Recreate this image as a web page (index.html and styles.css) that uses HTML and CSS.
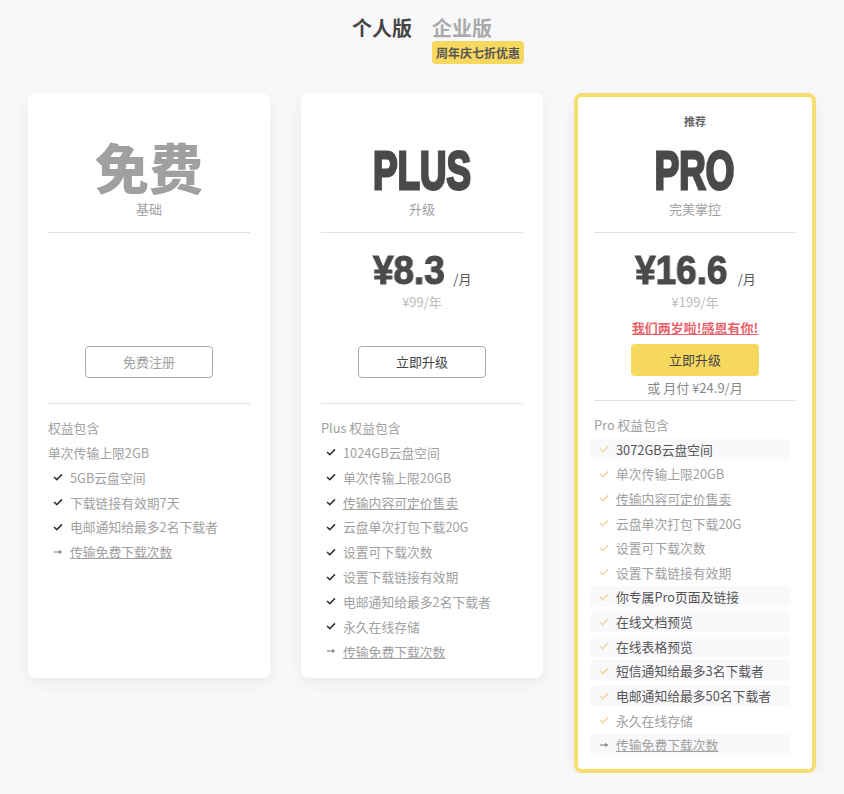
FILE: index.html
```html
<!DOCTYPE html>
<html lang="zh-CN">

<head>
    <meta charset="UTF-8">
    <title>价格方案</title>
    <link rel="stylesheet" href="styles.css">
</head>

<body>

    <svg class="icon-defs" width="0" height="0">
        <symbol id="check" viewBox="0 0 10 8">
            <path d="M1 4 L3.8 6.6 L9 1.4" fill="none" stroke="currentColor" stroke-width="1.5" />
        </symbol>
        <symbol id="arrow" viewBox="0 0 10 8">
            <path d="M1 4 H7.5" fill="none" stroke="currentColor" stroke-width="1.2" />
            <path d="M6.2 1.8 L9.4 4 L6.2 6.2 Z" fill="currentColor" />
        </symbol>
    </svg>

    <div class="tabs">
        <div class="tab tab-active">个人版</div>
        <div class="tab">企业版<span class="tab-badge">周年庆七折优惠</span></div>
    </div>

    <div class="plans">
        <div class="plan">
            <div class="plan-head">
                <div class="plan-name plan-name-cn">免费</div>
                <div class="plan-sub">基础</div>
            </div>
            <div class="plan-buy">
                <a class="btn btn-free">免费注册</a>
            </div>
            <ul class="features">
                <li class="features-title">权益包含</li>
                <li class="features-title">单次传输上限2GB</li>
                <li><svg class="icon"><use href="#check" /></svg>5GB云盘空间</li>
                <li><svg class="icon"><use href="#check" /></svg>下载链接有效期7天</li>
                <li><svg class="icon"><use href="#check" /></svg>电邮通知给最多2名下载者</li>
                <li><svg class="icon icon-arrow"><use href="#arrow" /></svg><u>传输免费下载次数</u></li>
            </ul>
        </div>

        <div class="plan">
            <div class="plan-head">
                <div class="plan-name"><span class="squeeze">PLUS</span></div>
                <div class="plan-sub">升级</div>
            </div>
            <div class="plan-buy">
                <div class="price"><span class="price-num">¥8.3</span><span class="price-unit">/月</span></div>
                <div class="price-year">¥99/年</div>
                <a class="btn">立即升级</a>
            </div>
            <ul class="features">
                <li class="features-title">Plus 权益包含</li>
                <li><svg class="icon"><use href="#check" /></svg>1024GB云盘空间</li>
                <li><svg class="icon"><use href="#check" /></svg>单次传输上限20GB</li>
                <li><svg class="icon"><use href="#check" /></svg><u>传输内容可定价售卖</u></li>
                <li><svg class="icon"><use href="#check" /></svg>云盘单次打包下载20G</li>
                <li><svg class="icon"><use href="#check" /></svg>设置可下载次数</li>
                <li><svg class="icon"><use href="#check" /></svg>设置下载链接有效期</li>
                <li><svg class="icon"><use href="#check" /></svg>电邮通知给最多2名下载者</li>
                <li><svg class="icon"><use href="#check" /></svg>永久在线存储</li>
                <li><svg class="icon icon-arrow"><use href="#arrow" /></svg><u>传输免费下载次数</u></li>
            </ul>
        </div>

        <div class="plan plan-pro">
            <div class="plan-head">
                <div class="plan-tag">推荐</div>
                <div class="plan-name"><span class="squeeze">PRO</span></div>
                <div class="plan-sub">完美掌控</div>
            </div>
            <div class="plan-buy">
                <div class="price"><span class="price-num">¥16.6</span><span class="price-unit">/月</span></div>
                <div class="price-year">¥199/年</div>
                <div class="promo">我们两岁啦!感恩有你!</div>
                <a class="btn btn-pro">立即升级</a>
                <div class="price-month">或 月付 ¥24.9/月</div>
            </div>
            <ul class="features">
                <li class="features-title">Pro 权益包含</li>
                <li class="hl"><svg class="icon"><use href="#check" /></svg>3072GB云盘空间</li>
                <li><svg class="icon"><use href="#check" /></svg>单次传输上限20GB</li>
                <li><svg class="icon"><use href="#check" /></svg><u>传输内容可定价售卖</u></li>
                <li><svg class="icon"><use href="#check" /></svg>云盘单次打包下载20G</li>
                <li><svg class="icon"><use href="#check" /></svg>设置可下载次数</li>
                <li><svg class="icon"><use href="#check" /></svg>设置下载链接有效期</li>
                <li class="hl"><svg class="icon"><use href="#check" /></svg>你专属Pro页面及链接</li>
                <li class="hl"><svg class="icon"><use href="#check" /></svg>在线文档预览</li>
                <li class="hl"><svg class="icon"><use href="#check" /></svg>在线表格预览</li>
                <li class="hl"><svg class="icon"><use href="#check" /></svg>短信通知给最多3名下载者</li>
                <li class="hl"><svg class="icon"><use href="#check" /></svg>电邮通知给最多50名下载者</li>
                <li><svg class="icon"><use href="#check" /></svg>永久在线存储</li>
                <li class="hl hl-muted"><svg class="icon icon-arrow"><use href="#arrow" /></svg><u>传输免费下载次数</u></li>
            </ul>
        </div>
    </div>

</body>

</html>
```

FILE: styles.css
```css
body {
    margin: 0;
    background: #f8f8fa;
    font-family: "Noto Sans CJK SC", "Liberation Sans", sans-serif;
    color: #a0a0a0;
}

.icon-defs {
    position: absolute;
}

.tabs {
    display: flex;
    justify-content: center;
    gap: 20px;
    height: 93px;
    box-sizing: border-box;
    padding-top: 14px;
}

.tab {
    position: relative;
    font-size: 20px;
    line-height: 28px;
    font-weight: 700;
    color: #aaa;
}

.tab-active {
    color: #444;
}

.tab-badge {
    position: absolute;
    top: 27px;
    left: 0;
    width: 92px;
    height: 23px;
    background: #f7d85e;
    border-radius: 4px;
    color: #555;
    font-size: 12px;
    line-height: 23px;
    text-align: center;
    white-space: nowrap;
}

.plans {
    display: flex;
    align-items: flex-start;
    gap: 31px;
    padding-left: 28px;
}

.plan {
    width: 242px;
    height: 585px;
    box-sizing: border-box;
    padding: 0 20px;
    background: #fff;
    border-radius: 8px;
    box-shadow: 0 5px 16px rgba(0, 0, 0, 0.06);
}

.plan-pro {
    height: 680px;
    padding: 0 16px;
    border: 4px solid #f7dc6f;
}

.plan-head {
    display: flex;
    flex-direction: column;
    justify-content: flex-end;
    align-items: center;
    height: 140px;
    padding-bottom: 14px;
    box-sizing: border-box;
    border-bottom: 1px solid #e2e2e2;
}

.plan-pro .plan-head {
    height: 136px;
}

.plan-tag {
    font-size: 11px;
    line-height: 16px;
    font-weight: 700;
    color: #666;
    margin-bottom: 11px;
}

.plan-name {
    height: 60px;
    line-height: 60px;
    font-family: "Liberation Sans", sans-serif;
    font-size: 54px;
    font-weight: 700;
    color: #4a4a4a;
}

.plan-name-cn {
    font-family: "Noto Sans CJK SC", sans-serif;
    font-weight: 900;
    font-size: 54px;
    line-height: 54px;
    color: #a0a0a0;
}

.squeeze {
    display: inline-block;
    transform: scaleX(0.68);
    will-change: transform;
    -webkit-text-stroke: 3px currentColor;
}

.plan-sub {
    height: 18px;
    font-size: 13px;
    line-height: 18px;
    color: #a0a0a0;
}

.plan-buy {
    display: flex;
    flex-direction: column;
    align-items: center;
    height: 171px;
    box-sizing: border-box;
    padding-bottom: 25px;
    border-bottom: 1px solid #e2e2e2;
}

.plan-pro .plan-buy {
    height: auto;
    padding-bottom: 3px;
}

.price {
    display: flex;
    align-items: baseline;
    height: 50px;
    margin-top: 12px;
    line-height: 50px;
    color: #4a4a4a;
}

.price-num {
    display: inline-block;
    margin: 0 -4px;
    font-family: "Liberation Sans", sans-serif;
    font-size: 41px;
    font-weight: 700;
    -webkit-text-stroke: 1.2px currentColor;
    transform: scaleX(0.9);
    will-change: transform;
}

.price-unit {
    margin-left: 9px;
    font-size: 13px;
    color: #555;
}

.price-year {
    margin-top: -2px;
    height: 18px;
    font-size: 13px;
    line-height: 18px;
    color: #bbb;
}

.promo {
    margin-top: 9px;
    height: 16px;
    font-size: 13px;
    line-height: 16px;
    font-weight: 700;
    color: #e8636a;
    text-decoration: underline;
}

.btn {
    display: block;
    width: 128px;
    height: 32px;
    margin-top: auto;
    box-sizing: border-box;
    border: 1px solid #aaa;
    border-radius: 4px;
    font-size: 13px;
    line-height: 30px;
    text-align: center;
    color: #444;
}

.btn-free {
    color: #a0a0a0;
}

.btn-pro {
    margin-top: 8px;
    background: #f7d85e;
    border: none;
    line-height: 32px;
}

.price-month {
    margin-top: 3px;
    height: 18px;
    font-size: 13px;
    line-height: 18px;
    color: #888;
}

.features {
    list-style: none;
    margin: 0;
    padding: 13px 0 0;
    font-size: 12.8px;
}

.features li {
    display: flex;
    align-items: center;
    height: 21px;
    margin-bottom: 3.85px;
    line-height: 21px;
    white-space: nowrap;
}

.icon {
    width: 10px;
    height: 8px;
    margin: 0 7px 0 5px;
    color: #333;
    flex: none;
}

.icon-arrow {
    color: #888;
}

.plan-pro .features li {
    margin-bottom: 3.65px;
}

.plan-pro .features li:not(.features-title) {
    margin-left: -4px;
    margin-right: 5px;
    border-radius: 5px;
}

.plan-pro .icon {
    margin-left: 9px;
    color: #f1d8a0;
}

.plan-pro .icon-arrow {
    color: #888;
}

.plan-pro .hl {
    background: #f9f9fb;
    color: #555;
}

.plan-pro .hl-muted {
    color: #a0a0a0;
}
```
